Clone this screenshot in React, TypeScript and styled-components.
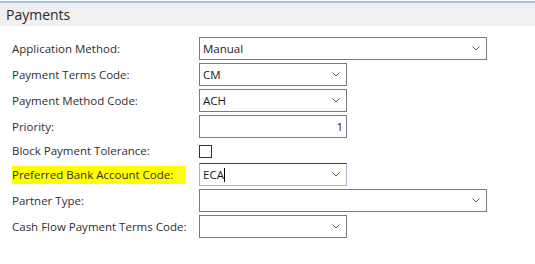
import React from "react";
import styled, { createGlobalStyle } from "styled-components";

const Global = createGlobalStyle`
  html, body { margin: 0; padding: 0; background: #ffffff; }
  body { font-family: "Open Sans", "Noto Sans", Arial, sans-serif; }
`;

const Page = styled.div`
  width: 535px;
  height: 264px;
  background: #ffffff;
  overflow: hidden;
`;

const SectionHeader = styled.div`
  margin-top: 1px;
  height: 23px;
  border-top: 2px solid #9ec1f0;
  background: #f0f0f0;
  display: flex;
  align-items: center;
  padding-left: 6px;
  font-size: 14px;
  color: #2b2b2b;
`;

const Form = styled.div`
  display: grid;
  grid-template-columns: 187px auto;
  row-gap: 3px;
  padding: 11px 0 0 12px;
  justify-items: start;
`;

const Label = styled.div<{ $h?: number }>`
  height: ${(p) => p.$h ?? 23}px;
  display: flex;
  align-items: center;
  font-size: 11.5px;
  color: #2f2f2f;
  white-space: nowrap;
`;

const Highlight = styled.span`
  background: #ffff00;
  padding: 1px 13px 1px 0;
  line-height: 16px;
`;

const Field = styled.div<{ $w: number; $focus?: boolean; $right?: boolean }>`
  box-sizing: border-box;
  width: ${(p) => p.$w}px;
  height: 23px;
  border: 1px solid ${(p) => (p.$focus ? "#b3add8" : "#7a7a7a")};
  border-top-color: ${(p) => (p.$focus ? "#3e3585" : "#7a7a7a")};
  display: flex;
  align-items: center;
  justify-content: ${(p) => (p.$right ? "flex-end" : "flex-start")};
  padding: 0 3px 0 3px;
  font-size: 11.5px;
  color: #1a1a1a;
  background: #ffffff;
`;

const Value = styled.span`
  flex: 1;
  white-space: nowrap;
`;

const Caret = styled.span`
  display: inline-block;
  width: 1px;
  height: 14px;
  background: #000;
  vertical-align: middle;
  margin-left: 0px;
`;

const ChevronBox = styled.span`
  display: flex;
  align-items: center;
  margin-right: 3px;
`;

const Checkbox = styled.div`
  box-sizing: border-box;
  width: 13px;
  height: 13px;
  border: 1px solid #333;
  margin-top: 4px;
  align-self: start;
`;

const Chevron = () => (
  <ChevronBox>
    <svg width="8" height="5" viewBox="0 0 8 5">
      <polyline points="0.5,0.5 4,4 7.5,0.5" fill="none" stroke="#5a5a5a" strokeWidth="1" />
    </svg>
  </ChevronBox>
);

const Select: React.FC<{ w: number; value?: string; focus?: boolean; caret?: boolean }> = ({ w, value, focus, caret }) => (
  <Field $w={w} $focus={focus}>
    <Value>
      {value}
      {caret && <Caret />}
    </Value>
    <Chevron />
  </Field>
);

export default function App() {
  return (
    <Page>
      <Global />
      <SectionHeader>Payments</SectionHeader>
      <Form>
        <Label>Application Method:</Label>
        <Select w={288} value="Manual" />

        <Label>Payment Terms Code:</Label>
        <Select w={148} value="CM" />

        <Label>Payment Method Code:</Label>
        <Select w={148} value="ACH" />

        <Label>Priority:</Label>
        <Field $w={148} $right>
          <span>1</span>
        </Field>

        <Label $h={19}>Block Payment Tolerance:</Label>
        <Checkbox />

        <Label>
          <Highlight>Preferred Bank Account Code:</Highlight>
        </Label>
        <Select w={148} value="ECA" focus caret />

        <Label>Partner Type:</Label>
        <Select w={288} />

        <Label>Cash Flow Payment Terms Code:</Label>
        <Select w={148} />
      </Form>
    </Page>
  );
}
